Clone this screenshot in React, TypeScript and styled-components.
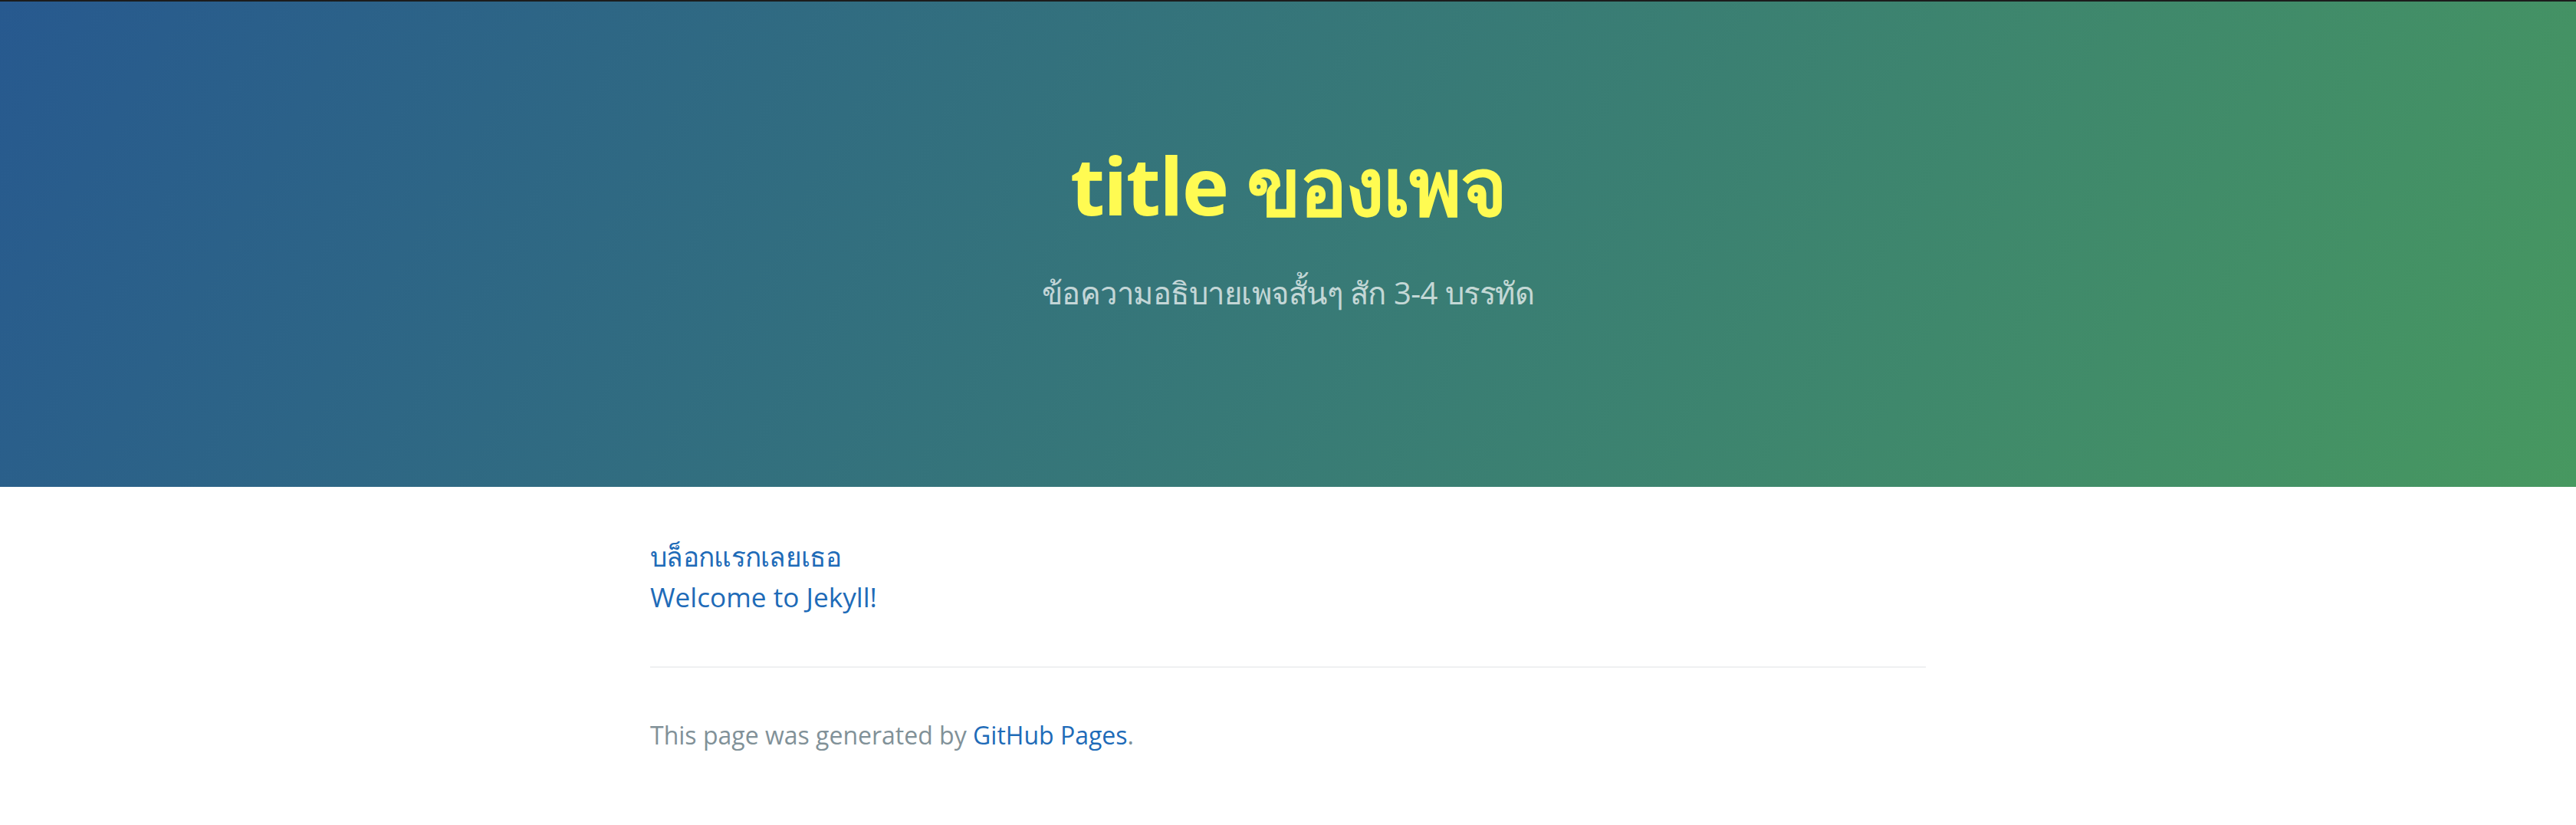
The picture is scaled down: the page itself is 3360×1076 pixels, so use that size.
import React from "react";
import styled, { createGlobalStyle } from "styled-components";

const GlobalStyle = createGlobalStyle`
  html, body {
    margin: 0;
    padding: 0;
    background: #ffffff;
  }
  body {
    font-family: "Open Sans", "Noto Sans", "Helvetica Neue", Helvetica, Arial, sans-serif;
    line-height: 1.5;
    color: #606c71;
    font-size: 32px;
  }
`;

const PageHeader = styled.section`
  border-top: 2px solid #1c1c1c;
  padding: 161px 192px 160px;
  color: #ffffff;
  text-align: center;
  background-color: #3a7a78;
  background-image: linear-gradient(120deg, #27598f, #479860);
`;

const ProjectName = styled.h1`
  margin: 0 0 3px;
  font-size: 104px;
  font-weight: 700;
  line-height: 1.5;
  letter-spacing: -2px;
  color: #fffb52;
`;

const ProjectTagline = styled.h2`
  margin: 33px 0 63px;
  font-size: 40px;
  font-weight: normal;
  line-height: 1.5;
  letter-spacing: -0.5px;
  opacity: 0.7;
`;

const MainContent = styled.section`
  box-sizing: border-box;
  max-width: 2048px;
  margin: 0 auto;
  padding: 64px 192px;
  font-size: 35.2px;
  word-wrap: break-word;
`;

const PostList = styled.div`
  display: flex;
  flex-direction: column;
  align-items: flex-start;
`;

const Link = styled.a<{ $tight?: boolean }>`
  color: #1e6bb8;
  text-decoration: none;
  letter-spacing: ${(p) => (p.$tight ? "-0.7px" : "normal")};
`;

const SiteFooter = styled.footer`
  margin-top: 64px;
  padding-top: 64px;
  border-top: 2px solid #eff0f1;
  font-size: 32px;
`;

const FooterCredits = styled.span`
  display: block;
  color: #819198;
`;

export default function App() {
  return (
    <>
      <GlobalStyle />
      <PageHeader>
        <ProjectName>title ของเพจ</ProjectName>
        <ProjectTagline>ข้อความอธิบายเพจสั้นๆ สัก 3-4 บรรทัด</ProjectTagline>
      </PageHeader>
      <MainContent>
        <PostList>
          <Link href="#" $tight>บล็อกแรกเลยเธอ</Link>
          <Link href="#">Welcome to Jekyll!</Link>
        </PostList>
        <SiteFooter>
          <FooterCredits>
            This page was generated by <Link href="#">GitHub Pages</Link>.
          </FooterCredits>
        </SiteFooter>
      </MainContent>
    </>
  );
}
